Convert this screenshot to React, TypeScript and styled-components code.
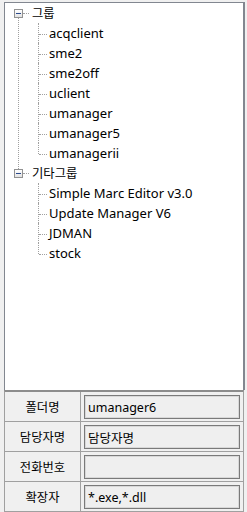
import { Fragment } from "react";
import styled, { createGlobalStyle } from "styled-components";

const GlobalStyle = createGlobalStyle`
  html, body {
    margin: 0;
    padding: 0;
    background: #f0f0f0;
  }
  body {
    font-family: "Noto Sans", "Noto Sans CJK KR", sans-serif;
    font-size: 13px;
    color: #000;
  }
`;

const Window = styled.div`
  width: 247px;
  height: 512px;
  display: flex;
  flex-direction: column;
  box-sizing: border-box;
  padding: 2px 2px 0 4px;
  background: #f0f0f0;
  overflow: hidden;
`;

const TreePanel = styled.div`
  flex: 1;
  background: #fff;
  border: 1px solid #828790;
  border-right-width: 2px;
  border-bottom: none;
`;

const TreeList = styled.ul`
  list-style: none;
  margin: 0;
  padding: 0;
`;

const Group = styled.li<{ $last?: boolean }>`
  position: relative;
  &::before {
    content: "";
    position: absolute;
    left: 13px;
    top: 14px;
    height: ${(p) => (p.$last ? "0" : "100%")};
    border-left: 1px dotted #a0a0a0;
  }
`;

const GroupRow = styled.div`
  position: relative;
  height: 20px;
  display: flex;
  align-items: center;
  padding-left: 9px;
`;

const Expander = styled.span`
  position: relative;
  z-index: 1;
  box-sizing: border-box;
  width: 9px;
  height: 9px;
  margin-top: 1px;
  border: 1px solid #919191;
  background: linear-gradient(#ffffff, #e2e2e2);
  display: flex;
  align-items: center;
  justify-content: center;
  &::after {
    content: "";
    width: 5px;
    height: 1px;
    background: #2b4a8c;
  }
`;

const Stub = styled.span`
  width: 6px;
  border-top: 1px dotted #a0a0a0;
  margin-top: 1px;
`;

const GroupName = styled.span`
  white-space: nowrap;
  line-height: 20px;
  margin-left: 3px;
  font-family: "Noto Sans CJK KR", sans-serif;
  font-size: 12.3px;
`;

const ItemName = styled.span`
  white-space: nowrap;
  line-height: 20px;
  font-size: 13px;
`;

const Children = styled.ul`
  list-style: none;
  margin: 0 0 0 33px;
  padding: 0;
`;

const Leaf = styled.li<{ $last?: boolean }>`
  position: relative;
  height: 20px;
  display: flex;
  align-items: center;
  padding-left: 11px;
  &::before {
    content: "";
    position: absolute;
    left: 0;
    top: 0;
    height: ${(p) => (p.$last ? "11px" : "20px")};
    border-left: 1px dotted #a0a0a0;
  }
  &::after {
    content: "";
    position: absolute;
    left: 1px;
    top: 11px;
    width: 8px;
    border-top: 1px dotted #a0a0a0;
  }
`;

const FormTable = styled.div`
  display: grid;
  grid-template-columns: 76px 1fr;
  grid-auto-rows: 30px;
  border-top: 2px solid #8c8c8c;
  border-left: 1px solid #a0a0a0;
  border-right: 1px solid #a0a0a0;
  margin-right: 1px;
  background: #f0f0f0;
`;

const FieldLabel = styled.div`
  display: flex;
  align-items: center;
  justify-content: center;
  border-right: 1px solid #a0a0a0;
  border-bottom: 1px solid #a0a0a0;
  font-family: "Noto Sans CJK KR", sans-serif;
  font-size: 12.3px;
`;

const FieldCell = styled.div`
  display: flex;
  align-items: flex-start;
  padding: 3px 3px 0 3px;
  border-bottom: 1px solid #a0a0a0;
`;

const FieldBox = styled.div`
  box-sizing: border-box;
  width: 100%;
  height: 24px;
  border: 1px solid #7a7a7a;
  box-shadow: inset 0 0 0 1px #d8d8d8;
  background: #efefef;
  display: flex;
  align-items: center;
  padding-left: 3px;
  white-space: nowrap;
  font-family: "Noto Sans", "Noto Sans CJK KR", sans-serif;
  font-size: 12.5px;
`;

const groups = [
  {
    name: "그룹",
    items: ["acqclient", "sme2", "sme2off", "uclient", "umanager", "umanager5", "umanagerii"],
  },
  {
    name: "기타그룹",
    items: ["Simple Marc Editor v3.0", "Update Manager V6", "JDMAN", "stock"],
  },
];

const fields = [
  { label: "폴더명", value: "umanager6" },
  { label: "담당자명", value: "담당자명" },
  { label: "전화번호", value: "" },
  { label: "확장자", value: "*.exe,*.dll" },
];

export default function App() {
  return (
    <>
      <GlobalStyle />
      <Window>
        <TreePanel>
          <TreeList>
            {groups.map((g, gi) => (
              <Group key={g.name} $last={gi === groups.length - 1}>
                <GroupRow>
                  <Expander />
                  <Stub />
                  <GroupName>{g.name}</GroupName>
                </GroupRow>
                <Children>
                  {g.items.map((it, i) => (
                    <Leaf key={it} $last={i === g.items.length - 1}>
                      <ItemName>{it}</ItemName>
                    </Leaf>
                  ))}
                </Children>
              </Group>
            ))}
          </TreeList>
        </TreePanel>
        <FormTable>
          {fields.map((f) => (
            <Fragment key={f.label}>
              <FieldLabel>{f.label}</FieldLabel>
              <FieldCell>
                <FieldBox>{f.value}</FieldBox>
              </FieldCell>
            </Fragment>
          ))}
        </FormTable>
      </Window>
    </>
  );
}
